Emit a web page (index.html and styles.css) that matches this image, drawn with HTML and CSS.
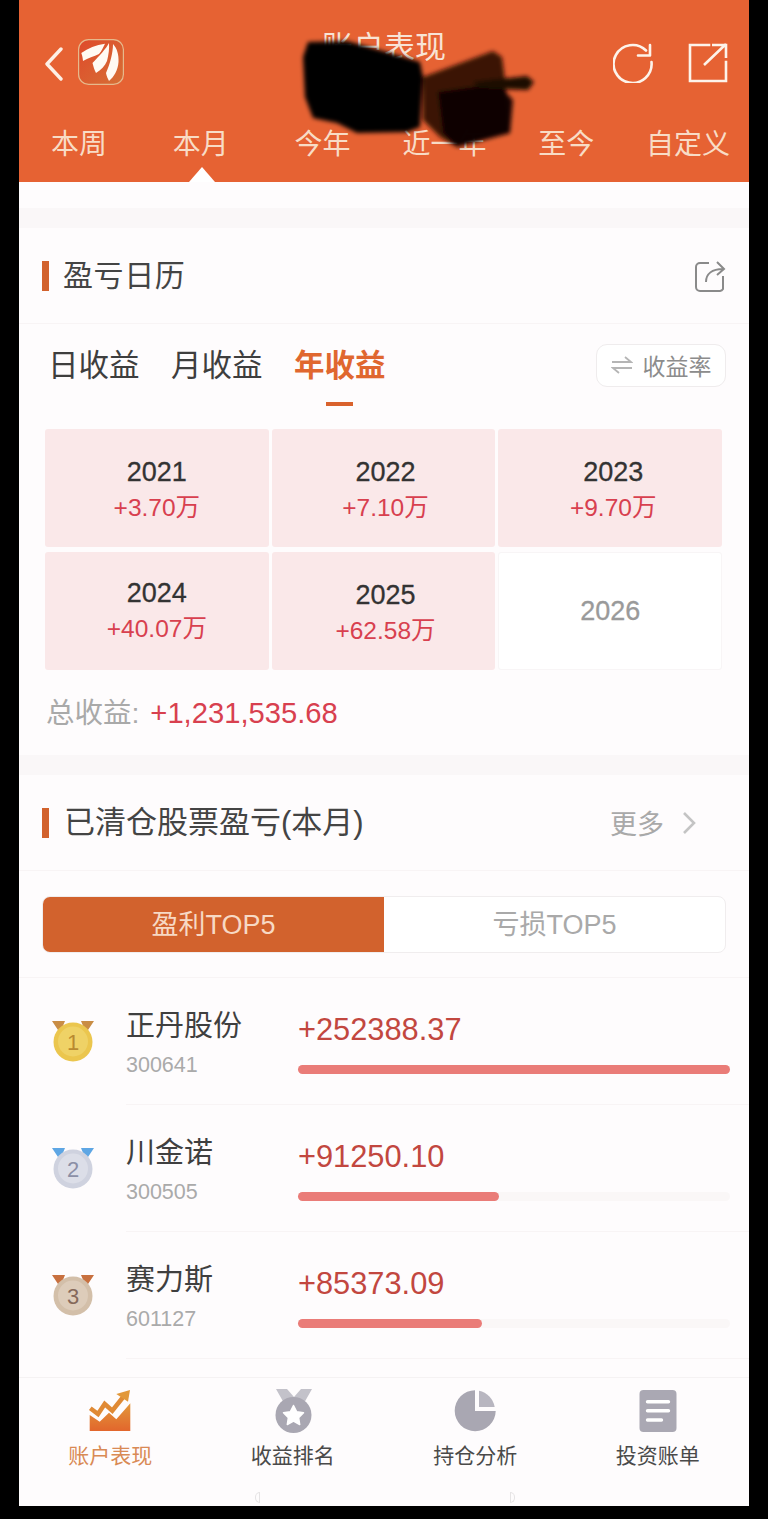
FILE: index.html
```html
<!DOCTYPE html>
<html lang="zh-CN">
<head>
<meta charset="utf-8">
<title>账户表现</title>
<link rel="stylesheet" href="styles.css">
</head>
<body>
<div class="screen">
  <header class="header">
    <div class="topbar">
      <div class="top-left">
        <svg class="back" viewBox="0 0 20 34" width="20" height="34"><path d="M17 2 3 17l14 15" fill="none" stroke="#fdf0e6" stroke-width="3.400" stroke-linecap="round" stroke-linejoin="round"/></svg>
        <svg class="logo" viewBox="0 0 46 46" width="46" height="46">
          <defs><linearGradient id="lg" x1="0" y1="0" x2="1" y2="1"><stop offset="0" stop-color="#df4a2b"/><stop offset="1" stop-color="#d66f35"/></linearGradient></defs>
          <rect x=".6" y=".6" width="44.800" height="44.800" rx="10" fill="url(#lg)" stroke="#e6b98c" stroke-width="1.200"/>
          <path d="M27 4.700C18 6 10 9 3.300 14c1 3 1.500 5 1.700 8C10 19 16 17.500 21 15c2.500-3 4.500-7 6-10.300Z" fill="#fffaf3"/>
          <path d="M31 4C28 10 21 17 14.500 24c1 4 2 7 3.500 10 5-3 9-7 11-12 1.500-6 2.500-12 2-18Z" fill="#fffaf3"/>
          <path d="M35 5c0 9-3 20-7 29 .5 3 2 6 3 8 5-4 9-11 9.500-19C41 16 39 9 35 5Z" fill="#fffaf3"/>
        </svg>
      </div>
      <h1 class="title">账户表现</h1>
      <div class="top-right">
        <svg viewBox="0 0 40 40" width="40" height="40"><path d="M33 7.500A19 19 0 1 0 38.500 19" fill="none" stroke="#fdf3ea" stroke-width="2.600" stroke-linecap="round"/><path d="M25 12.500h12V2" fill="none" stroke="#fdf3ea" stroke-width="2.600" stroke-linecap="round" stroke-linejoin="round"/></svg>
        <svg viewBox="0 0 40 40" width="40" height="40"><path d="M21 2H2v36h36V19" fill="none" stroke="#fdf3ea" stroke-width="2.600" stroke-linecap="square"/><path d="M16 22 38 1M24 2h14v13" fill="none" stroke="#fdf3ea" stroke-width="2.600"/></svg>
      </div>
    </div>
    <nav class="periods">
      <span class="period">本周</span>
      <span class="period">本月</span>
      <span class="period">今年</span>
      <span class="period">近一年</span>
      <span class="period">至今</span>
      <span class="period">自定义</span>
    </nav>
    <span class="caret"></span>
    <svg class="scribble" viewBox="0 0 768 182" width="768" height="182">
      <defs><filter id="soft" x="-10%" y="-10%" width="120%" height="120%"><feGaussianBlur stdDeviation="2.200"/></filter></defs>
      <g filter="url(#soft)">
        <path d="M423 77 493 51 502 57 508 103 510 133 457 147 440 137 423 120Z" fill="#2a1006" opacity=".92"/>
        <path d="M438 92 473 87 497 83 513 100 510 133 457 147 443 133Z" fill="#0e0603" opacity=".95"/>
        <path d="M473 82 527 76 534 82 528 90 480 88Z" fill="#1a0a04"/>
        <path d="M308 42 347 41 390 53 420 62 423 77 420 127 407 132 357 133 337 123 313 118 305 97 303 57Z" fill="#040201"/>
      </g>
    </svg>
  </header>

  <main class="content">
    <div class="spacer"></div>
    <section class="card">
      <div class="section-head">
        <h2 class="section-title">盈亏日历</h2>
        <svg class="share" viewBox="0 0 32 32" width="32" height="32"><path d="M15 3H6a4 4 0 0 0-4 4v20a4 4 0 0 0 4 4h20a4 4 0 0 0 3-2V16" fill="none" stroke="#8a8a8a" stroke-width="2"/><path d="M12 22c0-8 6-13 17-13M23 2l7 7-7 6" fill="none" stroke="#8a8a8a" stroke-width="2"/></svg>
      </div>
      <div class="range-row">
        <div class="range">日收益</div>
        <div class="range">月收益</div>
        <div class="range range-active">年收益<i class="range-line"></i></div>
        <button class="rate-btn">
          <svg viewBox="0 0 22 20" width="22" height="20"><path d="M1 7h19l-6-5M21 13H2l6 5" fill="none" stroke="#b5b5b5" stroke-width="1.800"/></svg>
          <span>收益率</span>
        </button>
      </div>
      <div class="years">
        <div class="year gain"><b>2021</b><em>+3.70万</em></div>
        <div class="year gain mid"><b>2022</b><em>+7.10万</em></div>
        <div class="year gain end"><b>2023</b><em>+9.70万</em></div>
        <div class="year gain low"><b>2024</b><em>+40.07万</em></div>
        <div class="year gain mid lower"><b>2025</b><em>+62.58万</em></div>
        <div class="year empty"><b>2026</b></div>
      </div>
      <div class="total"><span class="total-label">总收益:</span> <span class="total-value">+1,231,535.68</span></div>
    </section>
    <div class="divider"></div>
    <section class="card">
      <div class="section-head">
        <h2 class="section-title section-title-long">已清仓股票盈亏(本月)</h2>
        <div class="more">更多<svg viewBox="0 0 14 24" width="14" height="24"><path d="M2 2l10 10L2 22" fill="none" stroke="#c4c4c4" stroke-width="2.600"/></svg></div>
      </div>
      <div class="toggle-row">
        <div class="toggle">
          <span class="toggle-item toggle-on">盈利TOP5</span>
          <span class="toggle-item">亏损TOP5</span>
        </div>
      </div>
      <ul class="ranks">
        <li class="rank">
          <svg class="medal" viewBox="0 0 40 41" width="40" height="41"><path d="M-1 0h13l-5 12ZM41 0H28l5 12Z" fill="#c98d45"/><circle cx="20" cy="21" r="19.500" fill="#ebc64e"/><circle cx="20" cy="20.500" r="15" fill="#efd266"/><text x="20" y="28.500" class="medal-num gold">1</text></svg>
          <div class="rank-body">
            <div class="stock"><div class="stock-name">正丹股份</div><div class="stock-code">300641</div></div>
            <div class="profit"><div class="profit-num">+252388.37</div><div class="track"><div class="fill" style="width:100%"></div></div></div>
          </div>
        </li>
        <li class="rank">
          <svg class="medal" viewBox="0 0 40 41" width="40" height="41"><path d="M-1 0h13l-5 12ZM41 0H28l5 12Z" fill="#5ea6e4"/><circle cx="20" cy="21" r="19.500" fill="#cfd2df"/><circle cx="20" cy="20.500" r="15" fill="#dcdee8"/><text x="20" y="28.500" class="medal-num silver">2</text></svg>
          <div class="rank-body">
            <div class="stock"><div class="stock-name">川金诺</div><div class="stock-code">300505</div></div>
            <div class="profit"><div class="profit-num">+91250.10</div><div class="track"><div class="fill" style="width:46.500%"></div></div></div>
          </div>
        </li>
        <li class="rank">
          <svg class="medal" viewBox="0 0 40 41" width="40" height="41"><path d="M-1 0h13l-5 12ZM41 0H28l5 12Z" fill="#c8703f"/><circle cx="20" cy="21" r="19.500" fill="#d3bfa9"/><circle cx="20" cy="20.500" r="15" fill="#ddccba"/><text x="20" y="28.500" class="medal-num bronze">3</text></svg>
          <div class="rank-body">
            <div class="stock"><div class="stock-name">赛力斯</div><div class="stock-code">601127</div></div>
            <div class="profit"><div class="profit-num">+85373.09</div><div class="track"><div class="fill" style="width:42.600%"></div></div></div>
          </div>
        </li>
      </ul>
    </section>
  </main>

  <footer class="tabbar">
    <div class="tabs">
      <a class="tab tab-on">
        <svg viewBox="0 0 44 44" width="44" height="44"><defs><linearGradient id="cg" x1="0" y1="0" x2="0" y2="1"><stop offset="0" stop-color="#e2983a"/><stop offset="1" stop-color="#e2662c"/></linearGradient></defs><path d="M1.700 42V26l10 6.700L21 23.700l7.300 6.600 14-16V42Z" fill="url(#cg)"/><path d="M2.300 19.300 10 25l6.700-10 7.600 6.700L36 7" fill="none" stroke="#e08a35" stroke-width="4.500"/><path d="M28.300 5 42 1l-2 11.700Z" fill="#e2983a"/></svg>
        <span>账户表现</span>
      </a>
      <a class="tab">
        <svg viewBox="0 0 44 44" width="44" height="44"><path d="M5 0h11l7 8 7-8h11l-8.500 15h-19Z" fill="#c3c2ca"/><circle cx="22.500" cy="26" r="18" fill="#a9a7b2"/><path d="m22.500 16.500 3.200 6.300 6.800 1-4.900 4.800 1.100 6.900-6.200-3.300-6.200 3.300 1.100-6.900-4.900-4.800 6.800-1Z" fill="#fff" stroke="#fff" stroke-width="1.500" stroke-linejoin="round"/></svg>
        <span>收益排名</span>
      </a>
      <a class="tab">
        <svg viewBox="0 0 44 44" width="44" height="44"><path d="M22 1.200V22h20.700A20.500 20.500 0 1 1 22 1.200Z" fill="#a9a7b2"/><path d="M26 1.700A20 20 0 0 1 41.700 18H26Z" fill="#b8b6c0"/></svg>
        <span>持仓分析</span>
      </a>
      <a class="tab">
        <svg viewBox="0 0 44 44" width="44" height="44"><rect x="3.500" y="1" width="37" height="42" rx="4" fill="#aaa8b3"/><path d="M11.500 12.700h21M11.500 21.700h21M11.500 31h14" stroke="#fff" stroke-width="3.400" fill="none" stroke-linecap="round"/></svg>
        <span>投资账单</span>
      </a>
    </div>
    <div class="home"><i class="home-l"></i><i class="home-r"></i></div>
  </footer>
</div>
</body>
</html>
```

FILE: styles.css
```css
* { box-sizing: border-box; }
html, body { margin: 0; padding: 0; background: #000; }
body {
  width: 768px;
  height: 1519px;
  overflow: hidden;
  font-family: "Liberation Sans", "Noto Sans CJK SC", sans-serif;
}
.screen {
  width: 730px;
  height: 1506px;
  margin-left: 19px;
  display: flex;
  flex-direction: column;
  background: #fefcfd;
  overflow: hidden;
}

/* header */
.header {
  position: relative;
  height: 182px;
  flex: none;
  background: #e66233;
}
.topbar {
  display: grid;
  grid-template-columns: 1fr auto 1fr;
  height: 85px;
}
.top-left {
  display: flex;
  align-items: flex-start;
  padding: 40px 0 0 25px;
  gap: 14px;
}
.back { margin-top: 7px; }
.logo { margin-top: -1px; }
.title {
  margin: 31px 0 0;
  font-size: 31px;
  line-height: 34px;
  font-weight: 400;
  color: #f8e4d6;
}
.top-right {
  display: flex;
  justify-content: flex-end;
  align-items: flex-start;
  gap: 35px;
  padding: 43px 21px 0 0;
}
.periods {
  display: grid;
  grid-template-columns: repeat(6, 1fr);
  margin: 40px 0 0 -1px;
}
.period {
  text-align: center;
  font-size: 28px;
  line-height: 40px;
  color: #f8dcc6;
}
.caret {
  position: absolute;
  left: 170px;
  bottom: 0;
  width: 0;
  height: 0;
  border-left: 13px solid transparent;
  border-right: 13px solid transparent;
  border-bottom: 15px solid #fff;
}
.scribble {
  position: absolute;
  left: -19px;
  top: 0;
}

/* content */
.content {
  flex: 1;
  min-height: 0;
  overflow: hidden;
}
.spacer {
  height: 46px;
  background: linear-gradient(#fefcfd 0 26px, #faf7f8 26px);
}
.divider {
  height: 20px;
  background: #faf7f8;
}
.section-head {
  height: 96px;
  display: flex;
  align-items: center;
  justify-content: space-between;
  padding: 0 23px;
  border-bottom: 1px solid #f8f4f5;
}
.section-title {
  margin: 0;
  padding-left: 14px;
  border-left: 7px solid #d2622d;
  font-size: 30px;
  line-height: 30px;
  font-weight: 400;
  letter-spacing: .6px;
  color: #444;
}
.section-title-long {
  padding-left: 15px;
  font-size: 31px;
  letter-spacing: 0;
}
.more {
  display: flex;
  align-items: center;
  gap: 18px;
  padding-right: 30px;
  font-size: 27px;
  color: #a9a9a9;
}
.range-row {
  height: 105px;
  display: flex;
  align-items: flex-start;
  gap: 31.500px;
  padding: 20px 23px 0 29px;
}
.range {
  font-size: 30.500px;
  line-height: 43px;
  color: #3e3e3e;
}
.range-active {
  color: #e0672f;
  font-weight: 700;
}
.range-line {
  display: block;
  width: 27px;
  height: 4px;
  margin: 15px auto 0;
  background: #d9622d;
}
.rate-btn {
  margin-left: auto;
  width: 130px;
  height: 43px;
  display: flex;
  align-items: center;
  justify-content: center;
  gap: 10px;
  padding: 0 0 2px;
  background: #fff;
  border: 1px solid #efeced;
  border-radius: 11px;
  font: inherit;
  font-size: 23px;
  color: #8c8c8c;
}
.years {
  display: grid;
  grid-template-columns: repeat(3, 1fr);
  grid-auto-rows: 118px;
  gap: 5px 3px;
  padding: 0 27px 0 26px;
}
.year {
  display: flex;
  flex-direction: column;
  align-items: center;
  justify-content: center;
  border-radius: 3px;
  padding-top: 3px;
}
.gain { background: #fae8e9; }
.mid { padding-left: 4px; }
.end { padding-left: 6px; }
.low { padding-top: 0; }
.lower { padding-top: 4px; }
.empty { border: 1px solid #f8f5f6; background: #fff; padding-top: 0; }
.year b {
  font-size: 27px;
  line-height: 34px;
  font-weight: 400;
  color: #333;
  -webkit-text-stroke: .3px #333;
}
.year em {
  margin-top: 2px;
  font-size: 24.500px;
  line-height: 34px;
  font-style: normal;
  color: #d8404f;
}
.empty b {
  color: #9a9a9a;
  -webkit-text-stroke: .3px #9a9a9a;
}
.total {
  margin-top: 24px;
  height: 61px;
  padding-left: 27px;
  font-size: 28.500px;
  line-height: 38px;
}
.total-label { color: #a9a9a9; }
.total-value { margin-left: 3px; font-size: 29.200px; color: #d8404f; }
.toggle-row {
  height: 107px;
  padding: 25px 23px 0;
  border-bottom: 1px solid #f8f4f5;
}
.toggle {
  display: grid;
  grid-template-columns: 341px 1fr;
  height: 57px;
  border: 1px solid #f0edee;
  border-radius: 8px;
  background: #fff;
  overflow: hidden;
}
.toggle-item {
  text-align: center;
  font-size: 27px;
  line-height: 56px;
  color: #a9a9a9;
}
.toggle-on {
  background: #d2622d;
  color: #f7d9c4;
}
.ranks {
  margin: 0;
  padding: 0;
  list-style: none;
}
.rank {
  display: flex;
  align-items: flex-start;
  height: 127px;
}
.medal {
  flex: none;
  margin: 43px 33px 0 34px;
  overflow: visible;
}
.medal-num {
  font-size: 22px;
  text-anchor: middle;
}
.gold { fill: #b98a30; }
.silver { fill: #8b8fa6; }
.bronze { fill: #86695a; }
.rank-body {
  flex: 1;
  display: flex;
  height: 127px;
  border-bottom: 1px solid #f8f4f5;
}
.stock { width: 172px; }
.stock-name {
  margin-top: 28px;
  font-size: 29px;
  line-height: 40px;
  color: #3f3f3f;
}
.stock-code {
  margin-top: 5px;
  font-size: 21.500px;
  line-height: 28px;
  color: #aaa;
}
.profit {
  flex: 1;
  padding: 34px 19px 0 0;
}
.profit-num {
  font-size: 30.800px;
  line-height: 36px;
  color: #c2473f;
}
.track {
  height: 9px;
  margin-top: 17px;
  border-radius: 5px;
  background: #faf7f7;
}
.fill {
  height: 9px;
  border-radius: 5px;
  background: #ea7c78;
}

/* tab bar */
.tabbar {
  flex: none;
  height: 129px;
  border-top: 1px solid #f5f2f3;
  background: #fefcfd;
}
.tabs {
  display: grid;
  grid-template-columns: repeat(4, 1fr);
  padding-top: 11px;
}
.tab {
  display: flex;
  flex-direction: column;
  align-items: center;
  font-size: 21px;
  line-height: 30px;
  color: #4a4a4a;
}
.tab svg { height: 44px; }
.tab span { margin-top: 8px; }
.tab-on { color: #d98a55; }
.home {
  display: flex;
  justify-content: space-between;
  width: 260px;
  margin: 21px 0 0 236px;
}
.home i {
  display: block;
  width: 5px;
  height: 11px;
  border: 1px solid #e6e4e5;
}
.home-l { border-width: 1px 0 1px 1px; border-radius: 5px 0 0 5px; }
.home-r { border-width: 1px 1px 1px 0; border-radius: 0 5px 5px 0; }
```
